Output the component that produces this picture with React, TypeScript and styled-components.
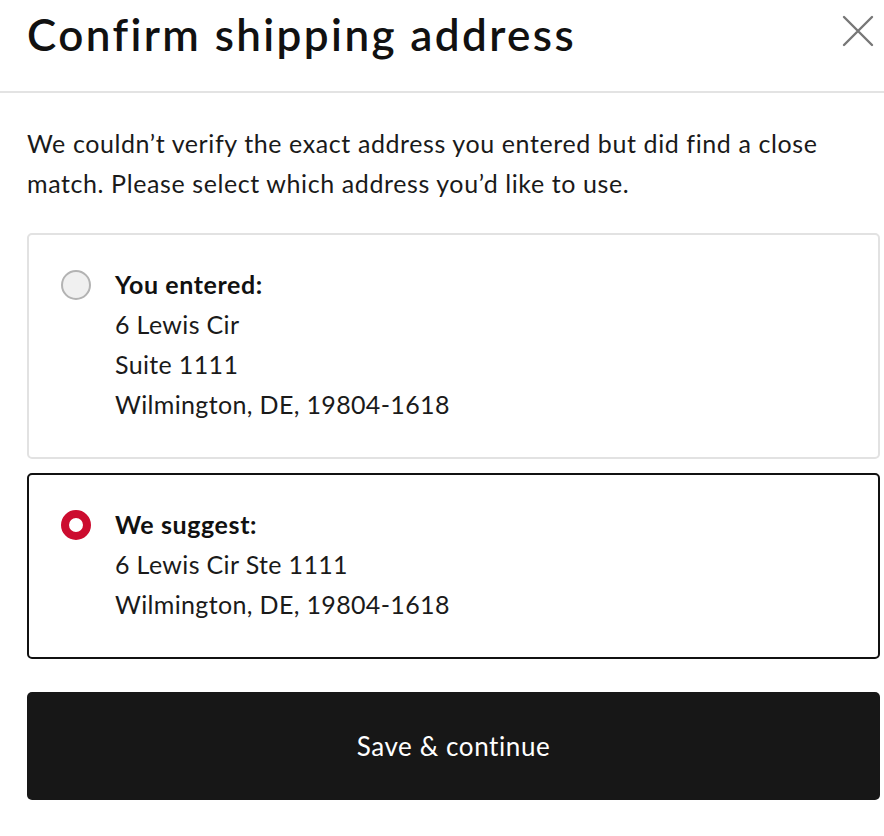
import styled, { createGlobalStyle } from 'styled-components';

const GlobalStyle = createGlobalStyle`
  body {
    margin: 0;
    background: #fff;
    font-family: Lato, 'Liberation Sans', sans-serif;
    color: #111;
  }
`;

const Dialog = styled.div`
  width: 884px;
  height: 836px;
  overflow: hidden;
  background: #fff;
`;

const Header = styled.header`
  display: flex;
  justify-content: space-between;
  align-items: flex-start;
  height: 93px;
  border-bottom: 2px solid #e3e3e3;
  box-sizing: border-box;
  padding: 7px 6px 0 27px;
`;

const Title = styled.h1`
  margin: 0;
  font-size: 44px;
  font-weight: 600;
  line-height: 54px;
  letter-spacing: 2.4px;
  color: #111;
`;

const CloseButton = styled.button`
  border: 0;
  background: none;
  padding: 4px;
  margin-top: 4px;
  cursor: pointer;
  display: flex;
`;

const Body = styled.div`
  padding: 30px 4px 0 27px;
  display: flex;
  flex-direction: column;
  letter-spacing: 0.6px;
`;

const Intro = styled.p`
  margin: 0 0 30px;
  font-size: 25px;
  line-height: 40px;
  color: #1a1a1a;
`;

const Card = styled.label<{ $selected?: boolean }>`
  display: flex;
  gap: 24px;
  padding: 29px 32px 33px;
  border: ${(p) => (p.$selected ? '2px solid #111' : '2px solid #e2e2e2')};
  border-radius: 5px;
  margin-bottom: 14px;
  cursor: pointer;
`;

const Radio = styled.span<{ $selected?: boolean }>`
  flex: none;
  width: 30px;
  height: 30px;
  margin-top: 6px;
  border-radius: 50%;
  box-sizing: border-box;
  border: ${(p) => (p.$selected ? '8px solid #cc0c2f' : '2px solid #b3b3b3')};
  background: ${(p) => (p.$selected ? '#fff' : '#f0f0f0')};
`;

const Lines = styled.div`
  font-size: 25px;
  line-height: 40px;
  letter-spacing: 0.35px;
  color: #1a1a1a;
`;

const Label = styled.div`
  font-weight: 700;
  letter-spacing: 0.6px;
  color: #111;
`;

const SubmitButton = styled.button`
  margin-top: 19px;
  height: 108px;
  border: 0;
  border-radius: 5px;
  background: #171717;
  color: #fff;
  font-family: inherit;
  font-size: 26px;
  letter-spacing: 0.6px;
  cursor: pointer;
`;

type Address = { label: string; lines: string[]; selected?: boolean };

const addresses: Address[] = [
  { label: 'You entered:', lines: ['6 Lewis Cir', 'Suite 1111', 'Wilmington, DE, 19804-1618'] },
  { label: 'We suggest:', lines: ['6 Lewis Cir Ste 1111', 'Wilmington, DE, 19804-1618'], selected: true },
];

export default function App() {
  return (
    <>
      <GlobalStyle />
      <Dialog>
        <Header>
          <Title>Confirm shipping address</Title>
          <CloseButton aria-label="Close">
            <svg width="32" height="32" viewBox="0 0 32 32">
              <path d="M2 2L30 30M30 2L2 30" stroke="#777" strokeWidth="2.4" strokeLinecap="round" />
            </svg>
          </CloseButton>
        </Header>
        <Body>
          <Intro>
            We couldn’t verify the exact address you entered but did find a close match. Please select which
            address you’d like to use.
          </Intro>
          {addresses.map((a) => (
            <Card key={a.label} $selected={a.selected}>
              <Radio $selected={a.selected} />
              <Lines>
                <Label>{a.label}</Label>
                {a.lines.map((l) => (
                  <div key={l}>{l}</div>
                ))}
              </Lines>
            </Card>
          ))}
          <SubmitButton>Save &amp; continue</SubmitButton>
        </Body>
      </Dialog>
    </>
  );
}
